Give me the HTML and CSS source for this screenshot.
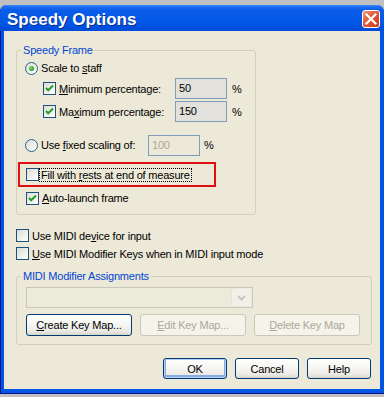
FILE: index.html
```html
<!DOCTYPE html>
<html lang="en">
  <head>
    <meta charset="UTF-8" />
    <title>Speedy Options</title>
    <link rel="stylesheet" href="styles.css">
  </head>
  <body>
    <div class="window">
      <div class="titlebar">
        <span class="title">Speedy Options</span>
        <span class="close">
          <svg width="16" height="16" viewBox="0 0 16 16">
            <path d="M3.5 3.5 L12.5 12.5 M12.5 3.5 L3.5 12.5" stroke="#fff" stroke-width="2.2" stroke-linecap="square" />
          </svg>
        </span>
      </div>

      <div class="client">
        <div class="group group-frame">
          <div class="group-title">Speedy Frame</div>

          <div class="row row-scale">
            <span class="radio checked"></span>
            <span class="text">Scale to <u>s</u>taff</span>
          </div>

          <div class="row row-min">
            <span class="check">
              <svg width="11" height="11" viewBox="0 0 11 11"><path d="M2 5 L4.2 7.3 L9 2.5" /></svg>
            </span>
            <span class="text text-pct"><u>M</u>inimum percentage:</span>
            <span class="edit">50</span>
            <span class="unit">%</span>
          </div>

          <div class="row row-max">
            <span class="check">
              <svg width="11" height="11" viewBox="0 0 11 11"><path d="M2 5 L4.2 7.3 L9 2.5" /></svg>
            </span>
            <span class="text text-pct">Ma<u>x</u>imum percentage:</span>
            <span class="edit">150</span>
            <span class="unit">%</span>
          </div>

          <div class="row row-fixed">
            <span class="radio"></span>
            <span class="text text-fixed">Use <u>f</u>ixed scaling of:</span>
            <span class="edit edit-off">100</span>
            <span class="unit unit-fixed">%</span>
          </div>

          <div class="row row-fill">
            <span class="check check-empty"></span>
            <span class="text focus">Fill with <u>r</u>ests at end of measure</span>
          </div>

          <div class="row row-auto">
            <span class="check">
              <svg width="11" height="11" viewBox="0 0 11 11"><path d="M2 5 L4.2 7.3 L9 2.5" /></svg>
            </span>
            <span class="text"><u>A</u>uto-launch frame</span>
          </div>
        </div>

        <div class="row row-device">
          <span class="check check-empty"></span>
          <span class="text">Use MIDI de<u>v</u>ice for input</span>
        </div>
        <div class="row row-keys">
          <span class="check check-empty"></span>
          <span class="text"><u>U</u>se MIDI Modifier Keys when in MIDI input mode</span>
        </div>

        <div class="group group-midi">
          <div class="group-title">MIDI Modifier Assignments</div>

          <div class="combo">
            <span class="combo-btn">
              <svg width="9" height="6" viewBox="0 0 9 6"><path d="M1 1 L4.5 4.5 L8 1" /></svg>
            </span>
          </div>

          <div class="keymap-buttons">
            <span class="button"><u>C</u>reate Key Map...</span>
            <span class="button disabled"><u>E</u>dit Key Map...</span>
            <span class="button disabled"><u>D</u>elete Key Map</span>
          </div>
        </div>

        <div class="dialog-buttons">
          <span class="button button-small default">OK</span>
          <span class="button button-small">Cancel</span>
          <span class="button button-small">Help</span>
        </div>
      </div>
    </div>
  </body>
</html>
```

FILE: styles.css
```css
* {
  box-sizing: border-box;
}
body {
  margin: 0;
  background: #c0c0c0;
  font-family: "Liberation Sans", Arial, sans-serif;
  font-size: 11px;
  letter-spacing: -0.2px;
  color: #000;
}
u {
  text-decoration: underline;
  text-underline-offset: 1px;
}

/* window frame */

.window {
  margin-top: 5px;
  width: 384px;
  height: 389px;
  background: #0055e5;
  border-radius: 7px 7px 0 0;
  display: flex;
  flex-direction: column;
  box-shadow: inset 1px 0 #00138c, inset 0 -1px #00138c;
}
.titlebar {
  height: 26px;
  flex-shrink: 0;
  display: flex;
  justify-content: space-between;
  align-items: flex-start;
  border-radius: 7px 7px 0 0;
  background: linear-gradient(to bottom, #3d8ffa 0, #1a6cf3 2px, #0a5de9 5px, #0057e6 18px, #004bd9 26px);
}
.title {
  padding: 4px 0 0 7px;
  line-height: 22px;
  font-size: 17px;
  font-weight: bold;
  letter-spacing: 0;
  color: #fff;
  text-shadow: 1px 1px #0c2a8f;
}
.close {
  width: 18px;
  height: 18px;
  margin: 5px 4px 0 0;
  border: 1px solid #fff;
  border-radius: 3px;
  background: linear-gradient(135deg, #f09a78 0, #e2593a 45%, #c93c1c 100%);
  display: flex;
  align-items: center;
  justify-content: center;
}
.client {
  flex: 1;
  margin: 0 4px 5px 4px;
  background: #ece9d8;
  padding-top: 19px;
}

/* group boxes */

.group {
  margin-left: 12px;
  border: 1px solid #d0d0bf;
  border-radius: 3px;
}
.group-frame {
  width: 240px;
  padding-bottom: 6px;
}
.group-midi {
  width: 356px;
  margin-top: 14px;
  padding-bottom: 8px;
}
.group-title {
  display: table;
  margin: -7px 0 0 4px;
  padding: 0 2px;
  line-height: 13px;
  background: #ece9d8;
  color: #0046d5;
}

/* rows */

.row {
  display: flex;
  align-items: center;
}
.text {
  margin-left: 3px;
  white-space: nowrap;
}
.row-scale {
  height: 20px;
  margin-top: 1px;
  padding-left: 8px;
}
.row-min,
.row-max {
  height: 21px;
  padding-left: 26px;
}
.row-max {
  margin-top: 2px;
}
.row-fixed {
  height: 20px;
  margin-top: 13px;
  padding-left: 8px;
}
.row-fill {
  height: 25px;
  width: 198px;
  margin: 7px 0 0 1px;
  padding-left: 6px;
  border: 2px solid #e01010;
}
.row-auto {
  height: 20px;
  margin-top: 1px;
  padding-left: 9px;
}
.row-device {
  height: 19px;
  margin-top: 11px;
  padding-left: 12px;
}
.row-keys {
  height: 17px;
  padding-left: 12px;
}
.text-pct {
  width: 116px;
}
.text-fixed {
  width: 107px;
}
.focus {
  margin-left: 1px;
  padding: 0 1px;
  line-height: 12px;
  outline: 1px dotted #000;
}

/* check boxes and radios */

.check,
.radio {
  width: 13px;
  height: 13px;
  flex-shrink: 0;
  border: 1px solid #1c5180;
  background: linear-gradient(135deg, #dcdcd5 0, #f2f2ee 60%, #fff 100%);
  display: flex;
  align-items: center;
  justify-content: center;
}
.check path {
  fill: none;
  stroke: #21a121;
  stroke-width: 2;
}
.radio {
  border-radius: 50%;
  border-color: #2c628b;
}
.radio.checked::after {
  content: "";
  width: 5px;
  height: 5px;
  border-radius: 50%;
  background: radial-gradient(circle at 35% 35%, #7de07a 0, #2ea82c 60%, #14881a 100%);
}

/* edit fields */

.edit {
  width: 52px;
  height: 21px;
  flex-shrink: 0;
  padding-left: 3px;
  line-height: 19px;
  border: 1px solid #7f9db9;
  background: #e2e1dc;
}
.edit-off {
  background: #ece9d8;
  color: #aca899;
}
.unit {
  margin-left: 5px;
}
.unit-fixed {
  margin-left: 4px;
}

/* combo box */

.combo {
  width: 227px;
  height: 21px;
  margin: 4px 0 0 9px;
  border: 1px solid #c9c7ba;
  background: #ebeadb;
  display: flex;
  justify-content: flex-end;
  padding: 1px;
}
.combo-btn {
  width: 20px;
  border-left: 1px solid #e6e4d6;
  background: #f1f0e8;
  border-radius: 2px;
  display: flex;
  align-items: center;
  justify-content: center;
}
.combo-btn path {
  fill: none;
  stroke: #c9c7ba;
  stroke-width: 2;
}

/* buttons */

.keymap-buttons {
  display: flex;
  gap: 8px;
  margin: 6px 0 0 9px;
}
.button {
  width: 106px;
  height: 22px;
  display: flex;
  align-items: center;
  justify-content: center;
  border: 1px solid #003c74;
  border-radius: 3px;
  background: linear-gradient(to bottom, #fff 0, #f7f7f4 40%, #ecebe6 80%, #d8d4c6 100%);
  white-space: nowrap;
}
.button.disabled {
  border-color: #c9c7ba;
  background: #f5f4ea;
  color: #aca899;
}
.dialog-buttons {
  display: flex;
  justify-content: flex-end;
  gap: 8px;
  margin-top: 13px;
  padding-right: 9px;
}
.button-small {
  width: 64px;
  height: 21px;
}
.default {
  box-shadow: inset 0 0 0 1px #b7cdf5, inset 0 -1px 0 2px #89abe4;
}
```
